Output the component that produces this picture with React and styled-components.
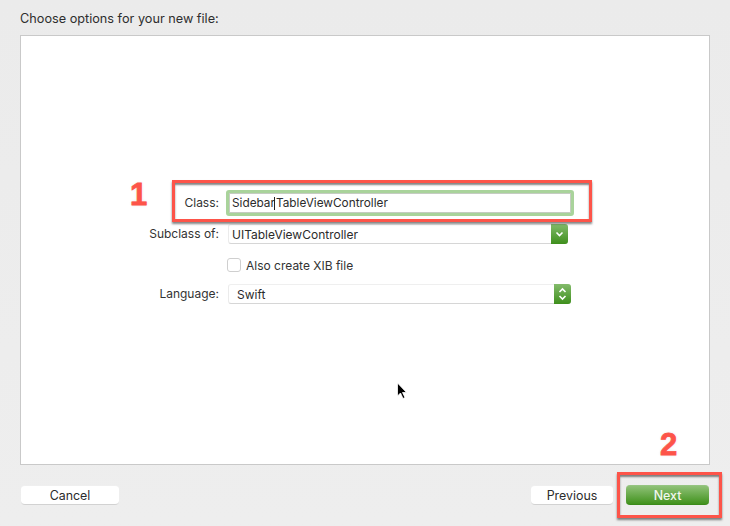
import styled, { createGlobalStyle } from 'styled-components';

const GlobalStyle = createGlobalStyle`
    html, body {
        margin: 0;
        padding: 0;
    }
    body {
        background: #ececec;
        font-family: Inter, "Liberation Sans", sans-serif;
    }
`;

const Sheet = styled.div`
    position: relative;
    box-sizing: border-box;
    width: 730px;
    height: 526px;
    padding: 11px 20px 0;
    background: linear-gradient(#ebebeb, #eeeeee);
    overflow: hidden;
`;

const Heading = styled.div`
    height: 24px;
    font-size: 12.7px;
    line-height: 16px;
    color: #2e2e2e;
`;

const Panel = styled.div`
    box-sizing: border-box;
    display: flex;
    flex-direction: column;
    height: 430px;
    padding-top: 154px;
    background: #fff;
    border: 1px solid #c9c9c9;
`;

const Row = styled.div`
    display: flex;
    align-items: center;
    gap: 8px;
    height: ${(p) => p.$height}px;
    margin-bottom: ${(p) => p.$gap}px;
`;

const Label = styled.div`
    flex: none;
    width: 198px;
    font-size: 12px;
    line-height: 16px;
    text-align: right;
    color: #333;
`;

const TextInput = styled.div`
    box-sizing: border-box;
    display: flex;
    align-items: center;
    width: 348px;
    height: 26px;
    margin-left: -1px;
    padding-left: 3px;
    background: #fff;
    border: 3px solid #a9d39b;
    border-radius: 3px;
    box-shadow: inset 0 0 0 1px rgba(90, 110, 80, 0.35);
    font-size: 11.8px;
    color: #2b2b2b;
`;

const Caret = styled.span`
    flex: none;
    width: 1px;
    height: 13px;
    margin: 0 1px 0 -1px;
    background: #222;
`;

const Select = styled.div`
    box-sizing: border-box;
    display: flex;
    align-items: center;
    justify-content: space-between;
    width: ${(p) => p.$width}px;
    height: 20px;
    margin-left: 1px;
    padding-left: ${(p) => p.$inset}px;
    background: #fff;
    border-top: 1px solid #efefef;
    border-bottom: 1px solid #d6d6d6;
    border-left: 1px solid #ebebeb;
    border-radius: 3px;
    font-size: 12px;
    color: #2b2b2b;
`;

const Stepper = styled.div`
    display: flex;
    align-items: center;
    justify-content: center;
    width: 17px;
    height: 20px;
    margin-top: -1px;
    margin-bottom: -1px;
    border-radius: 0 3px 3px 0;
    background: linear-gradient(#83bb6b, #3e8f1c);
`;

const CheckRow = styled.label`
    display: flex;
    align-items: center;
    gap: 5px;
    font-size: 12px;
    color: #333;
`;

const Checkbox = styled.span`
    box-sizing: border-box;
    width: 14px;
    height: 14px;
    background: #fff;
    border: 1px solid #cfcfcf;
    border-radius: 3px;
`;

const Footer = styled.div`
    display: flex;
    align-items: center;
    margin-top: 20px;
    padding-left: 1px;
`;

const Button = styled.button`
    box-sizing: border-box;
    width: ${(p) => p.$width}px;
    height: 20px;
    margin-right: ${(p) => p.$gap || 0}px;
    padding: 0;
    background: ${(p) => (p.$primary ? 'linear-gradient(#8fc177, #41921d)' : '#fff')};
    border: none;
    border-top: 1px solid ${(p) => (p.$primary ? '#95c480' : '#efefef')};
    border-bottom: 1px solid ${(p) => (p.$primary ? '#3b8a1a' : '#d2d2d2')};
    border-radius: 4px;
    font-family: inherit;
    font-size: 12.4px;
    font-weight: ${(p) => (p.$primary ? 500 : 400)};
    color: ${(p) => (p.$primary ? '#f2f7ef' : '#2b2b2b')};
`;

const Callout = styled.div`
    position: absolute;
    left: ${(p) => p.$x}px;
    top: ${(p) => p.$y}px;
    box-sizing: border-box;
    width: ${(p) => p.$w}px;
    height: ${(p) => p.$h}px;
    border: 3px solid #fd5449;
    box-shadow: 0 2px 2px rgba(50, 50, 50, 0.6), inset 0 2px 2px rgba(50, 50, 50, 0.6);
`;

const Step = styled.div`
    position: absolute;
    left: ${(p) => p.$x}px;
    top: ${(p) => p.$y}px;
    font-family: "Liberation Sans", sans-serif;
    font-size: 31px;
    font-weight: 700;
    line-height: 32px;
    color: #fd5449;
    -webkit-text-stroke: 0.8px #fd5449;
    text-shadow: 0 0 2px #fff, 0 0 3px #ddd;
`;

const Cursor = styled.svg`
    position: absolute;
    left: 396px;
    top: 382px;
`;

const Chevrons = ({ double }) => (
    <svg width="11" height="16" viewBox="0 0 11 16" fill="none" stroke="#fff" strokeWidth="1.6">
        {double && <path d="M2.5 6 L5.5 3 L8.5 6" />}
        <path d={double ? 'M2.5 10 L5.5 13 L8.5 10' : 'M2.5 6.5 L5.5 9.5 L8.5 6.5'} />
    </svg>
);

export default function App() {
    return (
        <Sheet>
            <GlobalStyle />
            <Heading>Choose options for your new file:</Heading>
            <Panel>
                <Row $height={26} $gap={8}>
                    <Label>Class:</Label>
                    <TextInput>Sidebar<Caret />TableViewController</TextInput>
                </Row>
                <Row $height={20} $gap={14}>
                    <Label>Subclass of:</Label>
                    <Select $width={340} $inset={3}>
                        UITableViewController
                        <Stepper><Chevrons /></Stepper>
                    </Select>
                </Row>
                <Row $height={14} $gap={12}>
                    <Label />
                    <CheckRow><Checkbox />Also create XIB file</CheckRow>
                </Row>
                <Row $height={20} $gap={0}>
                    <Label>Language:</Label>
                    <Select $width={343} $inset={8}>
                        Swift
                        <Stepper><Chevrons double /></Stepper>
                    </Select>
                </Row>
            </Panel>
            <Footer>
                <Button $width={98} $gap={412}>Cancel</Button>
                <Button $width={82} $gap={13}>Previous</Button>
                <Button $width={83} $primary>Next</Button>
            </Footer>
            <Callout $x={172} $y={180} $w={420} $h={42} />
            <Callout $x={617} $y={472} $w={105} $h={46} />
            <Step $x={130} $y={179}>1</Step>
            <Step $x={660} $y={429}>2</Step>
            <Cursor width="12" height="18" viewBox="0 0 12 18">
                <path d="M1.5 1 L1.5 14 L4.5 11 L7 16.5 L9 15.5 L6.5 10.5 L10.5 10.5 Z" fill="#000" stroke="#fff" strokeWidth="0.8" />
            </Cursor>
        </Sheet>
    );
}
